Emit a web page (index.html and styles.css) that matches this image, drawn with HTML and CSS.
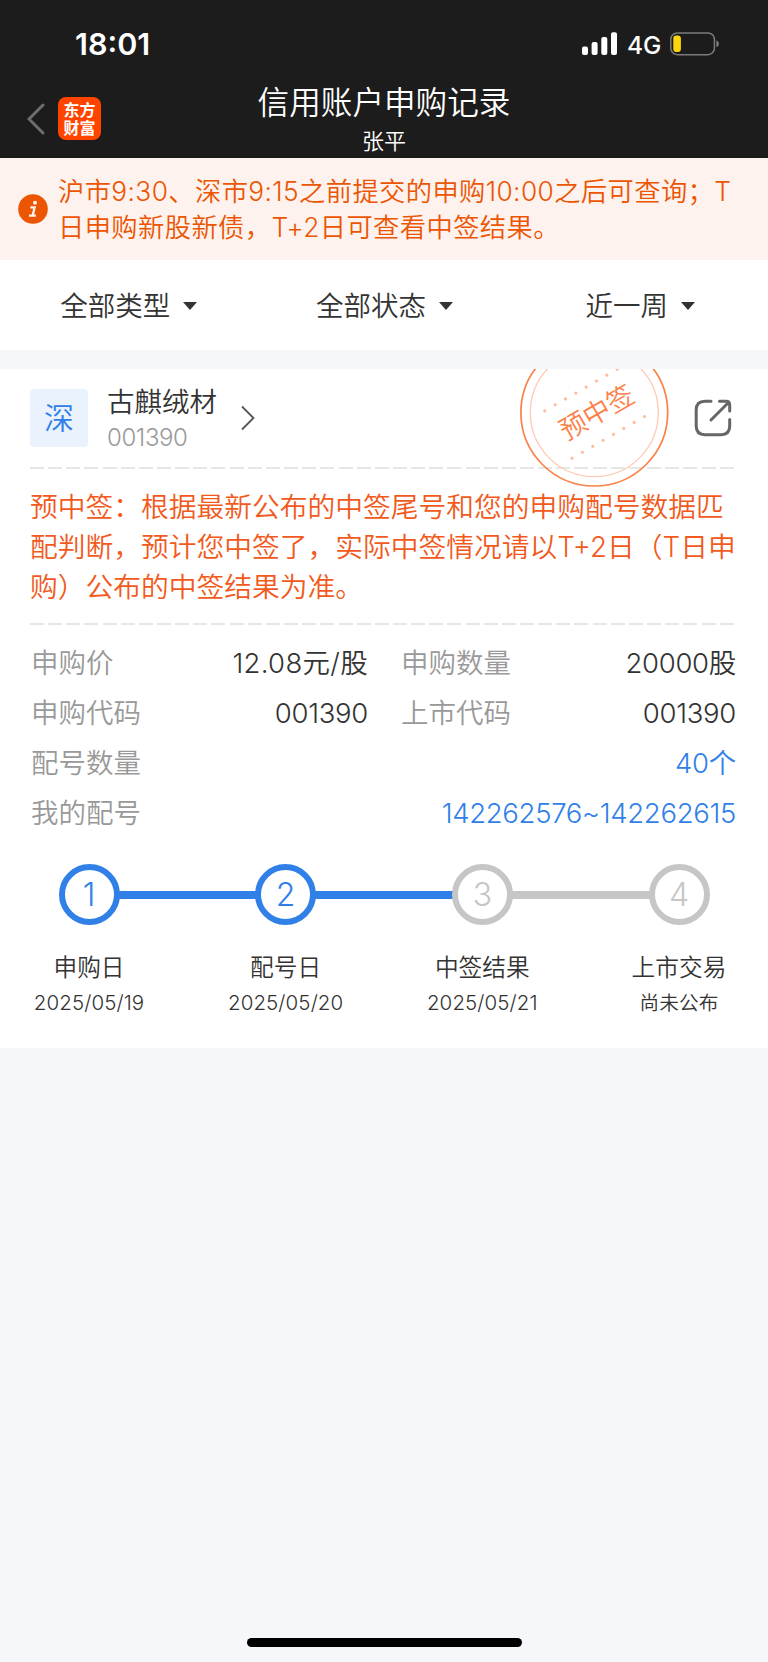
FILE: index.html
```
<!DOCTYPE html>
<html lang="zh-CN">
<head>
<meta charset="utf-8">
<title>信用账户申购记录</title>
<link rel="stylesheet" href="styles.css">
</head>
<body>
<div class="screen">
  <header class="top">
    <div class="status">
      <span class="time">18:01</span>
      <div class="status-right">
        <svg class="signal" width="36" height="24" viewBox="0 0 36 24" fill="#fff">
          <rect x="0" y="14.500" width="6" height="8.500" rx="2"/>
          <rect x="9.600" y="10" width="6" height="13" rx="2"/>
          <rect x="19.300" y="5" width="6" height="18" rx="2"/>
          <rect x="29" y="0.300" width="6" height="22.700" rx="2"/>
        </svg>
        <span class="net">4G</span>
        <svg class="battery" width="50" height="24" viewBox="0 0 50 24">
          <rect x="0.800" y="0.900" width="43.600" height="21.800" rx="6.500" fill="none" stroke="#7b7b7b" stroke-width="1.500"/>
          <rect x="3.300" y="3.400" width="7.600" height="16.700" rx="3" fill="#ffd60a"/>
          <path d="M46.300 8.300Q49 9.300 49 11.800T46.300 15.300Z" fill="#7b7b7b"/>
        </svg>
      </div>
    </div>
    <div class="nav">
      <div class="nav-left">
        <svg width="18" height="32" viewBox="0 0 18 32" fill="none" stroke="#6e6e6e" stroke-width="3" stroke-linecap="round"><path d="M16 2L2 16L16 30"/></svg>
        <div class="logo">东方<br>财富</div>
      </div>
      <div class="titles">
        <h1 class="title">信用账户申购记录</h1>
        <div class="subtitle">张平</div>
      </div>
    </div>
  </header>

  <div class="notice">
    <svg class="info" width="30" height="30" viewBox="0 0 30 30">
      <circle cx="15" cy="15" r="14.800" fill="#ec5502"/>
      <circle cx="17" cy="8.800" r="2" fill="#fff3ee"/>
      <path d="M12.300 13.300H16.600L14.700 21.400M11 21.700H17.900" fill="none" stroke="#fff3ee" stroke-width="2.300"/>
    </svg>
    <div class="notice-text">
      <div>沪市9:30、深市9:15之前提交的申购10:00之后可查询；T</div>
      <div>日申购新股新债，T+2日可查看中签结果。</div>
    </div>
  </div>

  <nav class="filters">
    <div class="filter">全部类型<i class="caret"></i></div>
    <div class="filter">全部状态<i class="caret"></i></div>
    <div class="filter">近一周<i class="caret"></i></div>
  </nav>

  <section class="card">
    <div class="card-head">
      <div class="market">深</div>
      <div class="stock">
        <div class="stock-name">古麒绒材</div>
        <div class="stock-code">001390</div>
      </div>
      <svg class="chev" width="14" height="26" viewBox="0 0 14 26" fill="none" stroke="#555" stroke-width="1.800"><path d="M1 1.500L12.500 13L1 24.500"/></svg>
      <svg class="share" width="38" height="38" viewBox="0 0 38 38" fill="none" stroke="#666" stroke-width="3" stroke-linecap="round" stroke-linejoin="round">
        <path d="M17 2.200H11Q2.200 2.200 2.200 11V27Q2.200 35.700 11 35.700H27Q35.700 35.700 35.700 27V20.500M25.500 2.200H32Q35.700 2.200 35.700 6V12M34 4L17 21"/>
      </svg>
    </div>
    <svg class="stamp" width="150" height="120" viewBox="0 0 150 120">
      <g transform="translate(75.300 43.600)">
        <circle r="73.400" fill="none" stroke="#fd8048" stroke-width="1.700"/>
        <circle r="64" fill="none" stroke="#fdcbb2" stroke-width="1.300"/>
        <g fill="none" stroke="#fdbb9c" stroke-width="3.200" stroke-linecap="round" stroke-dasharray="0 11.930">
          <path d="M-49.500 -1.800L24 -44"/>
          <path d="M-22.200 45.600L50.300 3.800"/>
        </g>
        <text class="stamp-text" transform="translate(2.500 0) rotate(-30)" y="9.500" text-anchor="middle">预中签</text>
      </g>
    </svg>
    <div class="dash"></div>
    <div class="message">
      <div>预中签：根据最新公布的中签尾号和您的申购配号数据匹</div>
      <div>配判断，预计您中签了，实际中签情况请以T+2日（T日申</div>
      <div>购）公布的中签结果为准。</div>
    </div>
    <div class="dash"></div>
    <div class="details">
      <div class="pair"><span class="key">申购价</span><span class="val price">12.08元/股</span></div>
      <div class="pair"><span class="key">申购数量</span><span class="val">20000股</span></div>
      <div class="pair"><span class="key">申购代码</span><span class="val">001390</span></div>
      <div class="pair"><span class="key">上市代码</span><span class="val">001390</span></div>
      <div class="pair wide"><span class="key">配号数量</span><span class="val link">40个</span></div>
      <div class="pair wide"><span class="key">我的配号</span><span class="val link">142262576~142262615</span></div>
    </div>
    <div class="track">
      <div class="node done">1</div><div class="bar done"></div>
      <div class="node done">2</div><div class="bar done"></div>
      <div class="node">3</div><div class="bar"></div>
      <div class="node">4</div>
    </div>
    <div class="steps">
      <div class="step"><div class="step-name">申购日</div><div class="step-date">2025/05/19</div></div>
      <div class="step"><div class="step-name">配号日</div><div class="step-date">2025/05/20</div></div>
      <div class="step"><div class="step-name">中签结果</div><div class="step-date">2025/05/21</div></div>
      <div class="step"><div class="step-name">上市交易</div><div class="step-date pending">尚未公布</div></div>
    </div>
  </section>
  <div class="home"></div>
</div>
</body>
</html>
```
FILE: styles.css
```
* { box-sizing: border-box; }
body {
  margin: 0;
  font-family: Inter, "Noto Sans CJK SC", sans-serif;
  font-weight: 350;
  color: #333;
  background: #f6f7fa;
  white-space: nowrap;
}
.screen {
  width: 768px;
  height: 1662px;
  display: flex;
  flex-direction: column;
  overflow: hidden;
}
.top { height: 158px; flex: none; background: #1c1c1c; color: #fff; }
.status {
  height: 82px;
  padding: 5px 48px 0 75px;
  display: flex;
  justify-content: space-between;
  align-items: center;
}
.time { font-size: 30.5px; font-weight: 600; line-height: 36px; }
.status-right { display: flex; align-items: center; }
.net { font-size: 24.5px; font-weight: 450; margin: 2px 10px 0 9px; width: 33px; line-height: 30px; }
.nav { display: grid; grid-template-columns: 1fr auto 1fr; height: 76px; }
.nav-left { display: flex; align-items: center; gap: 13px; padding: 0 0 3px 27px; height: 76px; }
.logo {
  width: 43px;
  height: 43px;
  padding-top: 3px;
  border-radius: 8px;
  background: #ff4400;
  text-align: center;
  font-family: "Noto Sans CJK SC", sans-serif;
  font-size: 16px;
  font-weight: 700;
  line-height: 18px;
}
.titles { text-align: center; padding-top: 1px; }
.title { margin: 0; font-size: 31.6px; font-weight: 350; line-height: 40px; }
.subtitle { font-size: 22px; line-height: 36px; }
.notice {
  height: 102px;
  flex: none;
  background: #fdf2ee;
  color: #ec5502;
  display: flex;
  align-items: center;
  padding-left: 18px;
}
.notice-text { margin-left: 10px; padding-top: 2px; font-size: 26.3px; line-height: 36px; letter-spacing: 0.38px; }
.filters { height: 90px; flex: none; background: #fff; display: flex; align-items: center; padding: 2px 0 0 1px; }
.filter {
  flex: 1;
  display: flex;
  justify-content: center;
  align-items: center;
  gap: 13px;
  font-size: 27.5px;
  line-height: 40px;
}
.caret { border: 7px solid transparent; border-top: 8px solid #333; border-bottom: 0; }
.card { position: relative; margin-top: 19px; height: 679px; flex: none; background: #fff; }
.card-head { height: 98px; padding: 0 36px 0 30px; display: flex; align-items: center; }
.market {
  width: 58px;
  height: 58px;
  border-radius: 4px;
  background: #e9f2fd;
  color: #3080e8;
  font-size: 30px;
  line-height: 58px;
  text-align: center;
}
.stock { width: 113px; margin-left: 19px; padding-top: 5px; }
.stock-name { font-size: 27.5px; line-height: 35px; }
.stock-code { font-size: 24px; line-height: 36px; color: #999; letter-spacing: -0.4px; }
.chev { margin-left: 21px; }
.share { margin-left: auto; }
.stamp { position: absolute; left: 519px; top: 0; }
.stamp-text { font-size: 27px; fill: #fd8048; }
.dash {
  height: 2px;
  margin: 0 33px 0 30px;
  background: repeating-linear-gradient(90deg, #e6e6e6 0 14px, transparent 14px 18.150px);
}
.message {
  height: 154px;
  padding: 18px 0 0 30px;
  color: #f15a1c;
  font-size: 27.75px;
  line-height: 40px;
}
.details {
  display: grid;
  grid-template-columns: 337px 335px;
  column-gap: 33px;
  grid-auto-rows: 50px;
  padding: 13px 0 0 31px;
  font-size: 27.5px;
  line-height: 50px;
}
.pair { display: flex; justify-content: space-between; }
.wide { grid-column: 1 / 3; }
.key { color: #999; }
.val { letter-spacing: -0.3px; }
.price { letter-spacing: 0.3px; }
.link { color: #3080e8; }
.track { display: flex; align-items: center; padding: 0 58.500px; margin-top: 26px; }
.node {
  width: 61px;
  height: 61px;
  border: 6px solid #c6c6c6;
  border-radius: 50%;
  color: #c6c6c6;
  font-size: 32px;
  font-weight: 300;
  line-height: 49px;
  text-align: center;
}
.node.done { border-color: #3080e8; color: #3080e8; }
.bar { flex: 1; height: 8px; margin: 0 -1px; background: #c6c6c6; }
.bar.done { background: #3080e8; }
.steps { display: flex; justify-content: space-between; padding: 25px 19px 0; text-align: center; }
.step { width: 140px; }
.step-name { font-size: 23.7px; line-height: 36px; }
.step-date { font-size: 20.5px; line-height: 34px; letter-spacing: 0.1px; }
.pending { font-size: 19.6px; }
.home { width: 275px; height: 9px; border-radius: 5px; background: #000; margin: 590px 0 0 247px; flex: none; }
```
